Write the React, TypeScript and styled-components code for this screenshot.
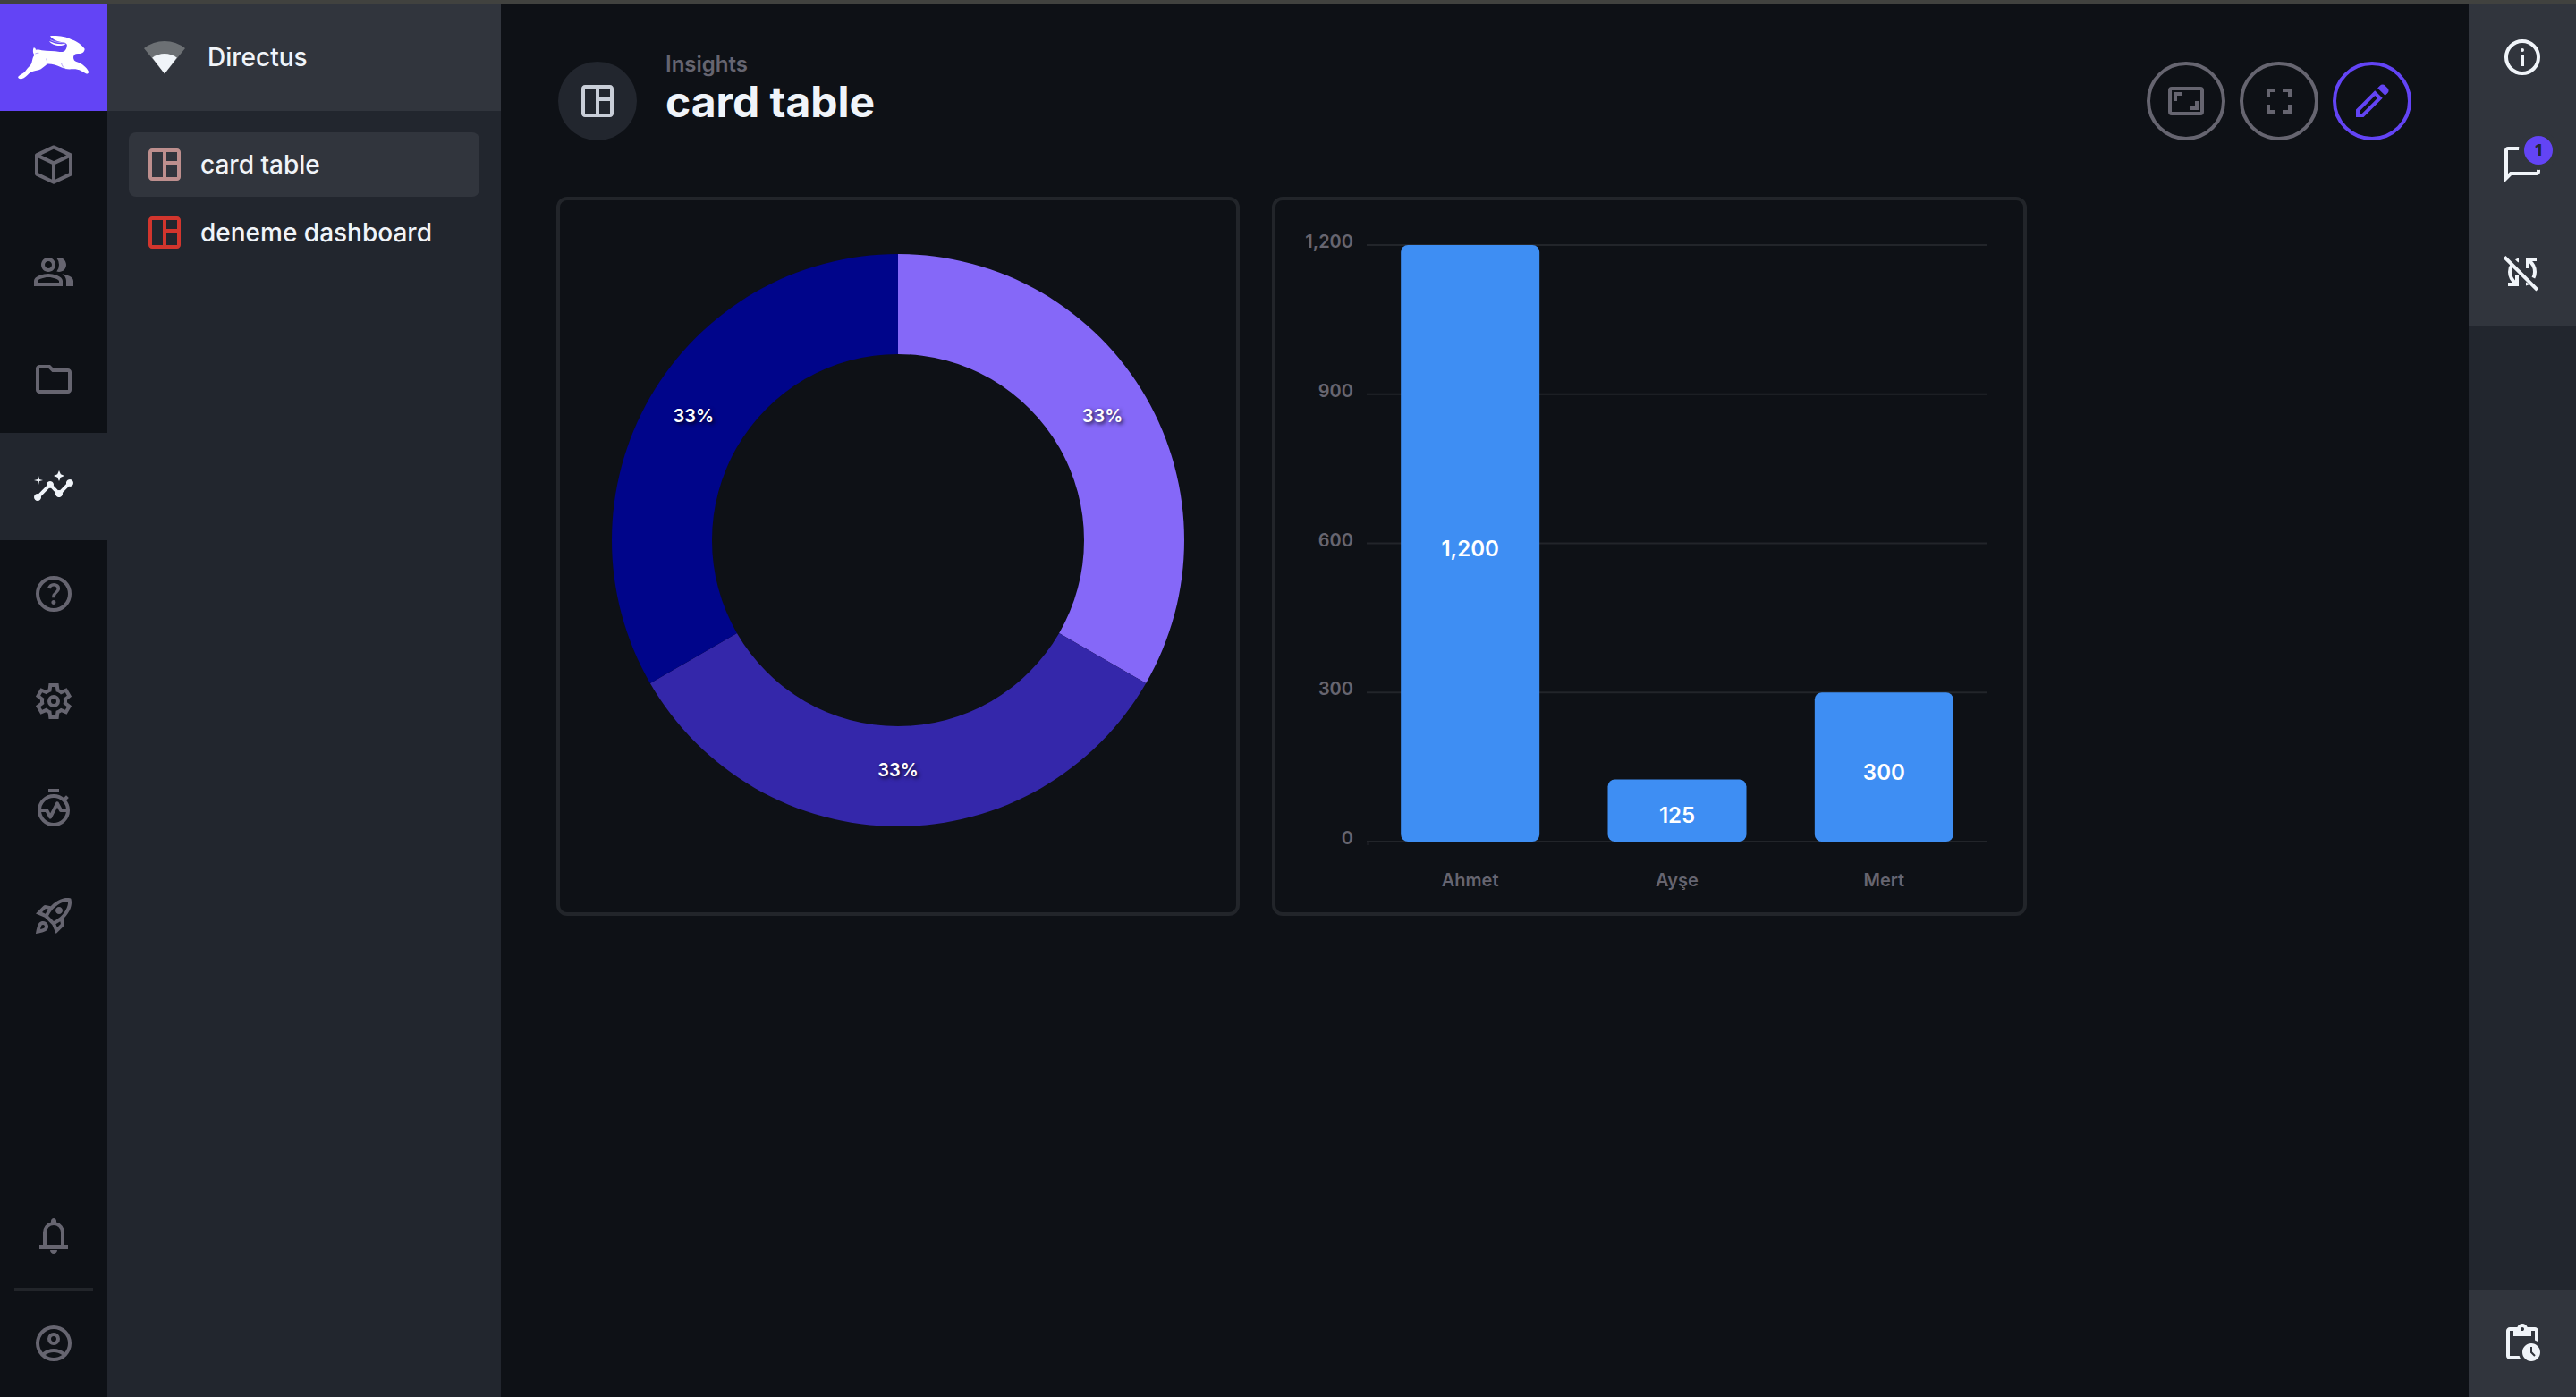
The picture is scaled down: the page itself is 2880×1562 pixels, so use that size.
import React from 'react';
import styled, { createGlobalStyle } from 'styled-components';
import {
  MdFullscreen,
  MdInsights,
  MdOutlinePeopleAlt,
  MdOutlineRocketLaunch,
  MdOutlineSpaceDashboard,
} from 'react-icons/md';

const color = {
  page: '#0e1116',
  subdued: '#22262e',
  raised: '#31353d',
  line: '#22252a',
  muted: '#666570',
  text: '#f0f4f9',
  purple: '#6344f5',
  blue: '#3e8ef3',
};

const GlobalStyle = createGlobalStyle`
  *, *::before, *::after { box-sizing: border-box; }
  body {
    margin: 0;
    background: ${color.page};
    color: ${color.text};
    font-family: Inter, "Liberation Sans", sans-serif;
    font-size: 28px;
    font-weight: 500;
  }
  button { font: inherit; padding: 0; border: 0; background: none; cursor: pointer; }
  a { color: inherit; text-decoration: none; }
  ul { list-style: none; margin: 0; padding: 0; }
`;

const Shell = styled.div`
  display: grid;
  grid-template-columns: 120px 440px minmax(0, 1fr) 120px;
  min-height: 100vh;
  border-top: 4px solid #41423f;
`;

const ModuleBar = styled.nav`
  display: flex;
  flex-direction: column;
`;

const Logo = styled.a`
  display: flex;
  align-items: center;
  justify-content: center;
  height: 120px;
  background: ${color.purple};
`;

const ModuleLink = styled.a<{ $active?: boolean }>`
  display: flex;
  align-items: center;
  justify-content: center;
  height: 120px;
  color: ${(p) => (p.$active ? color.text : color.muted)};
  background: ${(p) => (p.$active ? color.subdued : 'transparent')};
`;

const ModuleFooter = styled.div`
  margin-top: auto;
`;

const Divider = styled.hr`
  height: 4px;
  margin: -2px 16px;
  border: 0;
  background: ${color.line};
`;

const NavPanel = styled.aside`
  background: ${color.subdued};
`;

const ProjectInfo = styled.div`
  display: flex;
  align-items: center;
  gap: 24px;
  height: 120px;
  padding: 0 40px;
  background: ${color.raised};
`;

const NavList = styled.ul`
  display: flex;
  flex-direction: column;
  gap: 4px;
  padding: 24px;
`;

const NavLink = styled.a<{ $active?: boolean }>`
  display: flex;
  align-items: center;
  gap: 16px;
  height: 72px;
  padding: 0 16px;
  border-radius: 8px;
  background: ${(p) => (p.$active ? color.raised : 'transparent')};
`;

const NavIcon = styled.span<{ $tint: string }>`
  display: flex;
  color: ${(p) => p.$tint};
`;

const Header = styled.header`
  display: flex;
  align-items: center;
  gap: 32px;
  padding: 52px 64px 50px;
`;

const TitleIcon = styled.div`
  display: flex;
  align-items: center;
  justify-content: center;
  width: 88px;
  height: 88px;
  border-radius: 50%;
  color: #c9ced8;
  background: ${color.subdued};
`;

const TitleBlock = styled.div`
  flex: 1;
  padding-bottom: 30px;
`;

const Headline = styled.a`
  display: block;
  color: ${color.muted};
  font-size: 24px;
  font-weight: 600;
  line-height: 32px;
`;

const Title = styled.h1`
  margin: 0;
  font-size: 48px;
  font-weight: 700;
  line-height: 52px;
`;

const Actions = styled.div`
  display: flex;
  gap: 16px;
`;

const RoundButton = styled.button<{ $accent?: boolean }>`
  && {
    display: flex;
    align-items: center;
    justify-content: center;
    width: 88px;
    height: 88px;
    border: 4px solid currentColor;
    border-radius: 50%;
    color: ${(p) => (p.$accent ? color.purple : color.muted)};
  }
`;

const Workspace = styled.div`
  display: grid;
  grid-template-columns: minmax(0, 764px) minmax(0, 844px);
  gap: 36px;
  align-items: start;
  padding: 0 62px 62px;
`;

const Panel = styled.section`
  border: 4px solid ${color.line};
  border-radius: 12px;
`;

const Chart = styled.svg`
  display: block;
  width: 100%;
  font-size: 20px;
  font-weight: 600;
`;

const SliceLabel = styled.text`
  fill: #fff;
  text-anchor: middle;
  text-shadow: 2px 2px 4px rgba(0, 0, 0, 0.8);
`;

const AxisLabel = styled.text<{ $anchor: 'middle' | 'end' }>`
  fill: ${color.muted};
  text-anchor: ${(p) => p.$anchor};
`;

const BarLabel = styled.text`
  fill: #fff;
  font-size: 24px;
  text-anchor: middle;
`;

const Sidebar = styled.aside`
  display: flex;
  flex-direction: column;
  justify-content: space-between;
  background: ${color.subdued};
`;

const SidebarButton = styled.button`
  && {
    display: flex;
    align-items: center;
    justify-content: center;
    width: 100%;
    height: 120px;
    color: ${color.text};
    background: ${color.raised};
  }
`;

const BadgeAnchor = styled.span`
  position: relative;
  display: flex;
`;

const Badge = styled.span`
  position: absolute;
  top: -14px;
  right: -16px;
  width: 44px;
  height: 44px;
  border: 6px solid ${color.raised};
  border-radius: 50%;
  background: ${color.purple};
  color: ${color.subdued};
  font-size: 18px;
  font-weight: 800;
  line-height: 32px;
  text-align: center;
`;

function Icon({ children }: { children: React.ReactNode }) {
  return (
    <svg width="48" height="48" viewBox="0 0 24 24" fill="currentColor" aria-hidden="true">
      {children}
    </svg>
  );
}

const stroked = { fill: 'none', stroke: 'currentColor', strokeWidth: 2 };

const BoxIcon = () => (
  <Icon>
    <path {...stroked} strokeLinejoin="round" d="M12 2.2l9.5 4.5v10.6L12 21.9l-9.5-4.6V6.7zM2.5 6.7L12 11.2l9.5-4.5M12 11v11" />
  </Icon>
);

const FolderIcon = () => (
  <Icon>
    <path d="M4 20q-.825 0-1.412-.587T2 18V6q0-.825.588-1.412T4 4h6l2 2h8q.825 0 1.413.588T22 8v10q0 .825-.587 1.413T20 20zm0-2h16V8h-8.825l-2-2H4z" />
  </Icon>
);

const HelpIcon = () => (
  <Icon>
    <circle {...stroked} cx="12" cy="12" r="9" />
    <path d="M11.95 18q.525 0 .888-.363t.362-.887q0-.525-.362-.887t-.888-.363-.887.363-.363.887.363.887.887.363m-.9-3.85h1.85q0-.825.188-1.3t1.062-1.3q.65-.65 1.025-1.238T15.55 8.9q0-1.4-1.025-2.15T12.1 6q-1.425 0-2.312.75T8.55 8.55l1.65.65q.125-.45.563-.975T12.1 7.7q.8 0 1.2.438t.4.962q0 .5-.3.938t-.75.812q-1.1.975-1.35 1.475t-.25 1.825" />
  </Icon>
);

const GearIcon = () => (
  <Icon>
    <path
      fillRule="evenodd"
      d="m9.25 22-.4-3.2q-.325-.125-.612-.3t-.563-.375L4.7 19.375l-2.75-4.75 2.575-1.95Q4.5 12.5 4.5 12.337v-.675q0-.162.025-.337L1.95 9.375l2.75-4.75 2.975 1.25q.275-.2.575-.375t.6-.3l.4-3.2h5.5l.4 3.2q.325.125.613.3t.562.375l2.975-1.25 2.75 4.75-2.575 1.95q.025.175.025.338v.674q0 .163-.05.338l2.575 1.95-2.75 4.75-2.95-1.25q-.275.2-.575.375t-.6.3l-.4 3.2zm1.75-2h1.975l.35-2.65q.775-.2 1.438-.587t1.212-.938l2.475 1.025.975-1.7-2.15-1.625q.125-.35.175-.737T17.5 12t-.05-.787-.175-.738l2.15-1.625-.975-1.7-2.475 1.05q-.55-.575-1.212-.962t-1.438-.588L13 4h-1.975l-.35 2.65q-.775.2-1.437.588t-1.213.937L5.55 7.15l-.975 1.7 2.15 1.6q-.125.375-.175.75t-.05.8q0 .4.05.775t.175.75l-2.15 1.625.975 1.7 2.475-1.05q.55.575 1.213.963t1.437.587z"
    />
    <circle {...stroked} cx="12" cy="12" r="2.5" />
  </Icon>
);

const MonitorIcon = () => (
  <Icon>
    <path d="M9 1h6v2H9z" />
    <circle {...stroked} cx="12" cy="13" r="8" />
    <path {...stroked} d="M17.6 7.4l2.1-2.1" />
    <path {...stroked} strokeLinejoin="round" d="M4.5 13h3.6l2 3.8 3.9-7.6 2 3.8h3.5" />
  </Icon>
);

const BellIcon = () => (
  <Icon>
    <path d="M4 19v-2h2v-7q0-2.075 1.25-3.687T10.5 4.2v-.7q0-.625.438-1.062T12 2t1.063.438T13.5 3.5v.7q2 .5 3.25 2.113T18 10v7h2v2zm8 3q-.825 0-1.412-.587T10 20h4q0 .825-.587 1.413T12 22m-4-5h8v-7q0-1.65-1.175-2.825T12 6 9.175 7.175 8 10z" />
  </Icon>
);

const AccountIcon = () => (
  <Icon>
    <path d="M5.85 17.1q1.275-.975 2.85-1.537T12 15t3.3.563 2.85 1.537q.875-1.025 1.363-2.325T20 12q0-3.325-2.337-5.663T12 4 6.338 6.338 4 12q0 1.475.488 2.775T5.85 17.1M12 13q-1.475 0-2.488-1.012T8.5 9.5t1.013-2.488T12 6t2.488 1.013T15.5 9.5t-1.012 2.488T12 13m0 9q-2.075 0-3.9-.788t-3.175-2.137-2.137-3.175T2 12t.788-3.9 2.137-3.175T8.1 2.788 12 2t3.9.788 3.175 2.137 2.138 3.175T22 12t-.788 3.9-2.137 3.175-3.175 2.138T12 22m0-2q1.325 0 2.5-.387t2.15-1.113q-.975-.725-2.15-1.112T12 17t-2.5.388T7.35 18.5q.975.725 2.15 1.113T12 20m0-9q.65 0 1.075-.425T13.5 9.5t-.425-1.075T12 8t-1.075.425T10.5 9.5t.425 1.075T12 11" />
  </Icon>
);

const SignalIcon = () => (
  <Icon>
    <path fill="#6c7074" d="M.5 7Q5.600 3 12 3t11.500 4L12 21.300z" />
    <path d="M5.100 12.300Q8.200 10 12 10t6.900 2.300L12 21.300z" />
  </Icon>
);

const AspectIcon = () => (
  <Icon>
    <rect {...stroked} x="3" y="5" width="18" height="14" rx="1" />
    <path d="M5 12V7h5v2H7v3zM19 12v5h-5v-2h3v-3z" />
  </Icon>
);

const PencilIcon = () => (
  <Icon>
    <path d="M19.3 8.925l-4.25-4.2 1.4-1.4q.575-.575 1.412-.575.838 0 1.413.575l1.4 1.4q.575.575.6 1.388.025.812-.55 1.387ZM17.85 10.4 7.25 21H3v-4.25l10.6-10.6Zm-3.525-.725-.7-.7L5 17.6V19h1.4l8.625-8.625Z" />
  </Icon>
);

const InfoIcon = () => (
  <Icon>
    <circle {...stroked} cx="12" cy="12" r="9" />
    <circle cx="12" cy="8" r="1" />
    <path d="M11 11h2v6h-2z" />
  </Icon>
);

const ChatIcon = () => (
  <Icon>
    <path d="M2 22V4q0-.825.588-1.412T4 2h16q.825 0 1.413.588T22 4v12q0 .825-.587 1.413T20 18H6zm3.150-6H20V4H4v13.125z" />
  </Icon>
);

const SyncOffIcon = () => (
  <Icon>
    <path {...stroked} d="M2 3.700l18.400 18.400" />
    <path d="M4 20v-2h4v-4h2v6zM14 10V4h6v2h-4v4z" />
    <path {...stroked} d="M6.300 8C5.400 9.200 5 10.600 5 12c0 2.600 1.200 4.800 3.500 6.500M15.500 5.500C17.800 7.200 19 9.400 19 12c0 1.200-.3 2.300-.8 3.300" />
    <path d="M8 5.100q1-.6 2-.9v2.200L9.700 6.700zM14 17.700l2.100 1.200q-1 .6-2.100.9z" />
  </Icon>
);

const ClipboardIcon = () => (
  <Icon>
    <path d="M5 21q-.825 0-1.412-.587T3 19V5q0-.825.588-1.412T5 3h4.175q.275-.875 1.075-1.437T12 1q1 0 1.788.563T14.850 3H19q.825 0 1.413.588T21 5v6.250q-.45-.325-.95-.55T19 10.300V5h-2v3H7V5H5v14h5.300q.175.550.4 1.050t.55.950zm7-16q.425 0 .713-.288T13 4t-.288-.712T12 3t-.712.288T11 4t.288.713T12 5" />
    <path d="M17 12c-2.760 0-5 2.240-5 5s2.240 5 5 5 5-2.240 5-5-2.240-5-5-5zm1.650 7.350L16.500 17.200V14h1v2.790l1.850 1.850-.7.710z" />
  </Icon>
);

const RabbitLogo = () => (
  <svg width="80" height="50" viewBox="60 117 240 150" aria-hidden="true">
    <path
      fill="#fff"
      d="M168 121C185 119 220 121 240 133C258 138 275 152 284 164C283 174 276 180 264 180C252 179 247 184 246 192C246 200 250 206 258 208C275 213 292 228 297 240C298 247 292 249 288 247L272 238C262 232 250 231 240 232C225 233 212 230 205 226C190 218 172 214 158 215C148 222 140 232 130 235C115 238 105 240 98 246C90 254 82 262 74 264C64 266 59 262 61 257C68 250 78 247 84 240C90 232 96 225 104 216C109 208 107 195 116 184C110 180 109 168 113 160C117 160 119 162 120 167C127 165 135 167 140 169C160 171 180 171 200 174C215 176 222 168 224 155C226 148 222 144 215 143C198 140 178 136 168 121Z"
    />
    <path fill="#fff" d="M165 138C178 144 190 148 206 148L221 146C212 157 176 156 165 138Z" />
    <path
      fill="none"
      stroke="#b3a3fb"
      strokeWidth="3"
      d="M169 134C182 141 200 143 218 144M205 210C207 220 213 228 220 231M155 197C158 203 158 209 157 215M118 180C121 178 125 178 130 178"
    />
  </svg>
);

const modules = [
  { name: 'Content', icon: <BoxIcon /> },
  { name: 'User Directory', icon: <MdOutlinePeopleAlt size={48} /> },
  { name: 'File Library', icon: <FolderIcon /> },
  { name: 'Insights', icon: <MdInsights size={48} />, active: true },
  { name: 'Documentation', icon: <HelpIcon /> },
  { name: 'Settings', icon: <GearIcon /> },
  { name: 'Monitoring', icon: <MonitorIcon /> },
  { name: 'Launch', icon: <MdOutlineRocketLaunch size={48} /> },
];

const dashboards = [
  { name: 'card table', tint: '#bd8f8e', active: true },
  { name: 'deneme dashboard', tint: '#d2352d' },
];

const slices = ['#8568f8', '#3427aa', '#00058a'];

function DonutChart() {
  const cx = 378;
  const cy = 380;
  const outer = 320;
  const inner = 208;
  const point = (radius: number, turn: number) => {
    const angle = turn * 2 * Math.PI;
    return `${cx + radius * Math.sin(angle)} ${cy - radius * Math.cos(angle)}`;
  };
  const middle = (outer + inner) / 2;

  return (
    <Chart viewBox="0 0 756 796" role="img" aria-label="Share by person">
      {slices.map((fill, i) => {
        const from = i / slices.length;
        const to = (i + 1) / slices.length;
        return (
          <path
            key={fill}
            fill={fill}
            d={`M${point(outer, from)}A${outer} ${outer} 0 0 1 ${point(outer, to)}L${point(inner, to)}A${inner} ${inner} 0 0 0 ${point(inner, from)}Z`}
          />
        );
      })}
      {slices.map((fill, i) => {
        const angle = ((i + 0.5) / slices.length) * 2 * Math.PI;
        return (
          <SliceLabel key={fill} x={cx + middle * Math.sin(angle)} y={cy - middle * Math.cos(angle)}>
            33%
          </SliceLabel>
        );
      })}
    </Chart>
  );
}

const people = [
  { name: 'Ahmet', value: 1200 },
  { name: 'Ayşe', value: 125 },
  { name: 'Mert', value: 300 },
];
const ticks = [1200, 900, 600, 300, 0];

function BarChart() {
  const left = 102;
  const right = 796;
  const top = 50;
  const bottom = 717;
  const barWidth = 155;
  const step = (right - left) / people.length;
  const y = (value: number) => bottom - ((bottom - top) * value) / 1200;

  return (
    <Chart viewBox="0 0 836 796" role="img" aria-label="Total by person">
      {ticks.map((tick) => (
        <g key={tick}>
          <line x1={left} x2={right} y1={y(tick)} y2={y(tick)} stroke={color.line} strokeWidth="2" />
          <AxisLabel $anchor="end" x={left - 15} y={y(tick) + 3}>
            {tick.toLocaleString('en-US')}
          </AxisLabel>
        </g>
      ))}
      <line x1={left + 1} x2={left + 1} y1={bottom} y2={bottom + 4} stroke={color.line} />
      {people.map((person, i) => {
        const center = left + step * (i + 0.5);
        return (
          <g key={person.name}>
            <rect
              x={center - barWidth / 2}
              y={y(person.value)}
              width={barWidth}
              height={bottom - y(person.value)}
              rx="8"
              fill={color.blue}
            />
            <BarLabel x={center} y={y(person.value / 2) + 14}>
              {person.value.toLocaleString('en-US')}
            </BarLabel>
            <AxisLabel $anchor="middle" x={center} y={bottom + 50}>
              {person.name}
            </AxisLabel>
          </g>
        );
      })}
    </Chart>
  );
}

export default function App() {
  return (
    <>
      <GlobalStyle />
      <Shell>
        <ModuleBar aria-label="Modules">
          <Logo href="#" aria-label="Home">
            <RabbitLogo />
          </Logo>
          {modules.map((item) => (
            <ModuleLink key={item.name} href="#" aria-label={item.name} $active={item.active}>
              {item.icon}
            </ModuleLink>
          ))}
          <ModuleFooter>
            <ModuleLink href="#" aria-label="Notifications">
              <BellIcon />
            </ModuleLink>
            <Divider />
            <ModuleLink href="#" aria-label="Account">
              <AccountIcon />
            </ModuleLink>
          </ModuleFooter>
        </ModuleBar>

        <NavPanel>
          <ProjectInfo>
            <SignalIcon />
            <span>Directus</span>
          </ProjectInfo>
          <NavList>
            {dashboards.map((item) => (
              <li key={item.name}>
                <NavLink href="#" $active={item.active}>
                  <NavIcon $tint={item.tint}>
                    <MdOutlineSpaceDashboard size={48} />
                  </NavIcon>
                  {item.name}
                </NavLink>
              </li>
            ))}
          </NavList>
        </NavPanel>

        <main>
          <Header>
            <TitleIcon>
              <MdOutlineSpaceDashboard size={48} />
            </TitleIcon>
            <TitleBlock>
              <Headline href="#">Insights</Headline>
              <Title>card table</Title>
            </TitleBlock>
            <Actions>
              <RoundButton type="button" aria-label="Fit to screen">
                <AspectIcon />
              </RoundButton>
              <RoundButton type="button" aria-label="Full screen">
                <MdFullscreen size={48} />
              </RoundButton>
              <RoundButton type="button" aria-label="Edit panels" $accent>
                <PencilIcon />
              </RoundButton>
            </Actions>
          </Header>
          <Workspace>
            <Panel>
              <DonutChart />
            </Panel>
            <Panel>
              <BarChart />
            </Panel>
          </Workspace>
        </main>

        <Sidebar>
          <div>
            <SidebarButton type="button" aria-label="Information">
              <InfoIcon />
            </SidebarButton>
            <SidebarButton type="button" aria-label="Comments">
              <BadgeAnchor>
                <ChatIcon />
                <Badge>1</Badge>
              </BadgeAnchor>
            </SidebarButton>
            <SidebarButton type="button" aria-label="Auto refresh">
              <SyncOffIcon />
            </SidebarButton>
          </div>
          <SidebarButton type="button" aria-label="Activity log">
            <ClipboardIcon />
          </SidebarButton>
        </Sidebar>
      </Shell>
    </>
  );
}
